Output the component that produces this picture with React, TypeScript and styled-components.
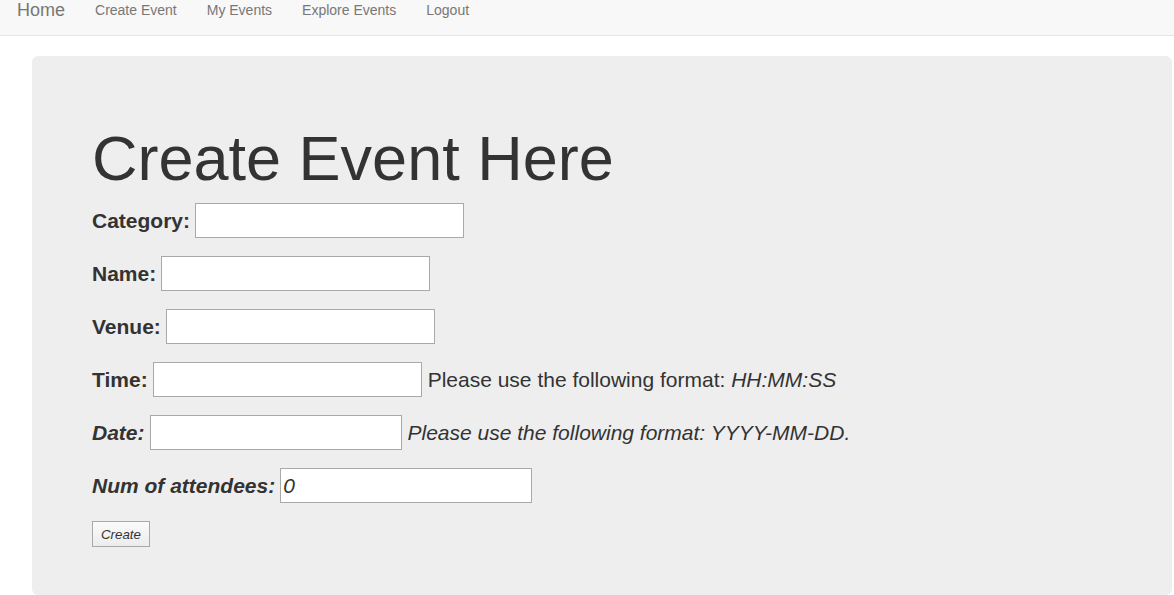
import React from "react";
import styled, { createGlobalStyle } from "styled-components";

const Global = createGlobalStyle`
  html, body { margin: 0; padding: 0; background: #fff; }
  body {
    font-family: "Liberation Sans", Arial, sans-serif;
    font-size: 14px;
    line-height: 1.42857;
    color: #333;
    overflow: hidden;
  }
  * { box-sizing: border-box; }
`;

const Navbar = styled.nav`
  height: 36px;
  background: #f8f8f8;
  border-bottom: 1px solid #e7e7e7;
  display: flex;
  align-items: flex-start;
  padding-left: 2px;
`;

const Brand = styled.a`
  font-size: 18px;
  line-height: 20px;
  color: #777;
  padding: 0 15px 0 15px;
  text-decoration: none;
`;

const NavLink = styled.a`
  font-size: 14px;
  line-height: 20px;
  color: #777;
  padding: 0 15px;
  text-decoration: none;
`;

const Container = styled.div`
  padding: 0 2px 0 32px;
  margin-top: 20px;
`;

const Jumbotron = styled.div`
  background: #eee;
  border-radius: 6px;
  padding: 48px 60px;
  width: 1140px;
`;

const Title = styled.h1`
  font-size: 63px;
  font-weight: 500;
  line-height: 1.1;
  margin: 20px 0 10px;
  color: #333;
`;

const Row = styled.div`
  display: flex;
  align-items: center;
  height: 35px;
  margin-bottom: 18px;
  font-size: 21px;
  white-space: pre;
`;

const Label = styled.label<{ $italic?: boolean }>`
  font-weight: bold;
  font-style: ${(p) => (p.$italic ? "italic" : "normal")};
  margin-right: 5px;
`;

const Input = styled.input<{ $w: number; $italic?: boolean }>`
  width: ${(p) => p.$w}px;
  height: 35px;
  border: 1px solid #a9a9a9;
  background: #fff;
  padding: 1px 2px;
  font-family: inherit;
  font-size: 21px;
  font-style: ${(p) => (p.$italic ? "italic" : "normal")};
  color: #333;
  outline: none;
  margin: 0;
`;

const Note = styled.span<{ $italic?: boolean }>`
  margin-left: 6px;
  font-style: ${(p) => (p.$italic ? "italic" : "normal")};
`;

const Button = styled.button`
  height: 26px;
  width: 58px;
  padding: 1px 6px;
  border: 1px solid #a9a9a9;
  border-radius: 0;
  background: linear-gradient(#fbfbfb, #ececec);
  font-family: inherit;
  font-size: 13.33px;
  font-style: italic;
  color: #333;
  margin-top: 0;
  display: block;
`;

export default function App() {
  return (
    <>
      <Global />
      <Navbar>
        <Brand href="#">Home</Brand>
        <NavLink href="#">Create Event</NavLink>
        <NavLink href="#">My Events</NavLink>
        <NavLink href="#">Explore Events</NavLink>
        <NavLink href="#">Logout</NavLink>
      </Navbar>
      <Container>
        <Jumbotron>
          <Title>Create Event Here</Title>
          <Row>
            <Label>Category:</Label>
            <Input $w={269} />
          </Row>
          <Row>
            <Label>Name:</Label>
            <Input $w={269} />
          </Row>
          <Row>
            <Label>Venue:</Label>
            <Input $w={269} />
          </Row>
          <Row>
            <Label>Time:</Label>
            <Input $w={269} />
            <Note>
              Please use the following format: <i>HH:MM:SS</i>
            </Note>
          </Row>
          <Row>
            <Label $italic>Date:</Label>
            <Input $w={252} />
            <Note $italic>Please use the following format: YYYY-MM-DD.</Note>
          </Row>
          <Row>
            <Label $italic>Num of attendees:</Label>
            <Input $w={252} $italic defaultValue="0" />
          </Row>
          <Button>Create</Button>
        </Jumbotron>
      </Container>
    </>
  );
}
